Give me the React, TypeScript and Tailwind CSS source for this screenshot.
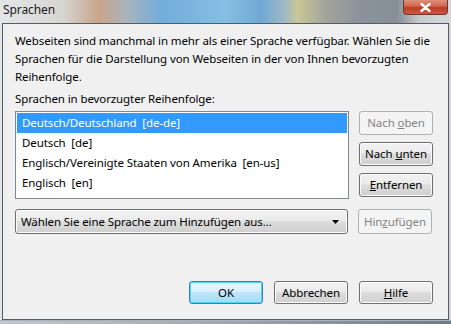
import React from 'react';

const font = { fontFamily: '"Noto Sans", "Open Sans", sans-serif' };

const Btn: React.FC<{ children: React.ReactNode; disabled?: boolean; primary?: boolean; className?: string }> = ({
  children,
  disabled,
  primary,
  className = '',
}) => {
  let cls =
    'border-[#707070] bg-[linear-gradient(#f2f2f2_0%,#ebebeb_45%,#dddddd_50%,#cfcfcf_100%)] text-black shadow-[inset_0_0_0_1px_#fcfcfc]';
  if (disabled) cls = 'border-[#adb2b5] bg-[#f4f4f4] text-[#838383]';
  if (primary)
    cls =
      'border-[#3c7fb1] bg-[linear-gradient(#eaf6fd_0%,#d9f0fc_45%,#bee6fd_50%,#a7d9f5_100%)] text-black shadow-[inset_0_0_0_1px_#48d7fb]';
  return (
    <div className={`flex w-[74px] items-center justify-center rounded-[3px] border ${cls} ${className}`}>
      {children}
    </div>
  );
};

const items = [
  'Deutsch/Deutschland  [de-de]',
  'Deutsch  [de]',
  'Englisch/Vereinigte Staaten von Amerika  [en-us]',
  'Englisch  [en]',
];

export default function App() {
  return (
    <div
      className="flex h-[324px] w-[451px] flex-col overflow-hidden bg-[linear-gradient(90deg,#e3e6e8_0%,#d6d5d2_14%,#c9a48a_22%,#a9b4bc_28%,#72addb_36%,#86bfe3_50%,#6fa9d4_58%,#9fb8c4_63%,#c9c796_66%,#a3a49c_72%,#8a929b_80%,#868e97_88%,#c7cbcf_93%,#d6d9dc_100%)] tracking-[-0.1px]"
      style={font}
    >
      {/* title bar */}
      <div className="flex h-[23px] shrink-0 items-start justify-between pl-[3px] pr-[3px]">
        <span className="mt-[1px] text-[12px] leading-[18px] text-[#1a1a1a]">Sprachen</span>
        <div className="flex h-[15px] w-[45px] items-center justify-center rounded-b-[4px] border border-t-0 border-[#6b3a30] bg-[linear-gradient(#e0907c_0%,#cf644d_45%,#bb3b25_55%,#cc5a40_100%)]">
          <svg width="11" height="9" viewBox="0 0 11 9">
            <path d="M1.5 1l8 7M9.5 1l-8 7" stroke="#fff" strokeWidth="2.4" strokeLinecap="round" />
          </svg>
        </div>
      </div>

      {/* dialog client area */}
      <div className="mx-[2px] flex h-[297px] shrink-0 flex-col border border-[#555c66] bg-[#f0f0f0] px-[12px] pt-[8px] text-[11.5px] text-black">
        <p className="whitespace-nowrap leading-[18px]">
          Webseiten sind manchmal in mehr als einer Sprache verfügbar. Wählen Sie die
          <br />
          Sprachen für die Darstellung von Webseiten in der von Ihnen bevorzugten
          <br />
          Reihenfolge.
        </p>
        <p className="mt-[4px] leading-[18px]">Sprachen in bevorzugter Reihenfolge:</p>

        <div className="mt-[3px] flex gap-[10px]">
          <div className="h-[88px] w-[334px] border border-[#828790] bg-white p-[1px]">
            {items.map((it, i) => (
              <div
                key={i}
                className={`flex h-[20px] items-center whitespace-pre pl-[5px] ${
                  i === 0 ? 'bg-[#3399ff] text-white' : ''
                }`}
              >
                {it}
              </div>
            ))}
          </div>
          <div className="flex flex-col gap-[7px]">
            <Btn disabled className="h-[24px]">
              <span>
                Nach <u>o</u>ben
              </span>
            </Btn>
            <Btn className="h-[24px]">
              <span>
                Nach <u>u</u>nten
              </span>
            </Btn>
            <Btn className="h-[24px]">
              <span>
                <u>E</u>ntfernen
              </span>
            </Btn>
          </div>
        </div>

        <div className="mt-[10px] flex gap-[10px]">
          <div className="flex h-[25px] w-[333px] items-center justify-between rounded-[3px] border border-[#707070] bg-[linear-gradient(#f2f2f2_0%,#ebebeb_45%,#dddddd_50%,#cfcfcf_100%)] pl-[5px] pr-[8px] shadow-[inset_0_0_0_1px_#fcfcfc]">
            <span>Wählen Sie eine Sprache zum Hinzufügen aus...</span>
            <svg width="7" height="4" viewBox="0 0 7 4">
              <path d="M0 0h7L3.5 4z" fill="#000" />
            </svg>
          </div>
          <Btn disabled className="h-[25px]">
            <span>
              Hin<u>z</u>ufügen
            </span>
          </Btn>
        </div>

        <div className="mt-auto mb-[15px] flex justify-end gap-[11px] pr-[3px]">
          <Btn primary className="h-[23px]">
            OK
          </Btn>
          <Btn className="h-[23px]">Abbrechen</Btn>
          <Btn className="h-[23px]">
            <span>
              <u>H</u>ilfe
            </span>
          </Btn>
        </div>
      </div>

      <div className="flex-1 border-t border-[#a9b2bc] bg-[linear-gradient(90deg,#c3c7cb,#9ea7b1_50%,#6f7a86)]" />
    </div>
  );
}
